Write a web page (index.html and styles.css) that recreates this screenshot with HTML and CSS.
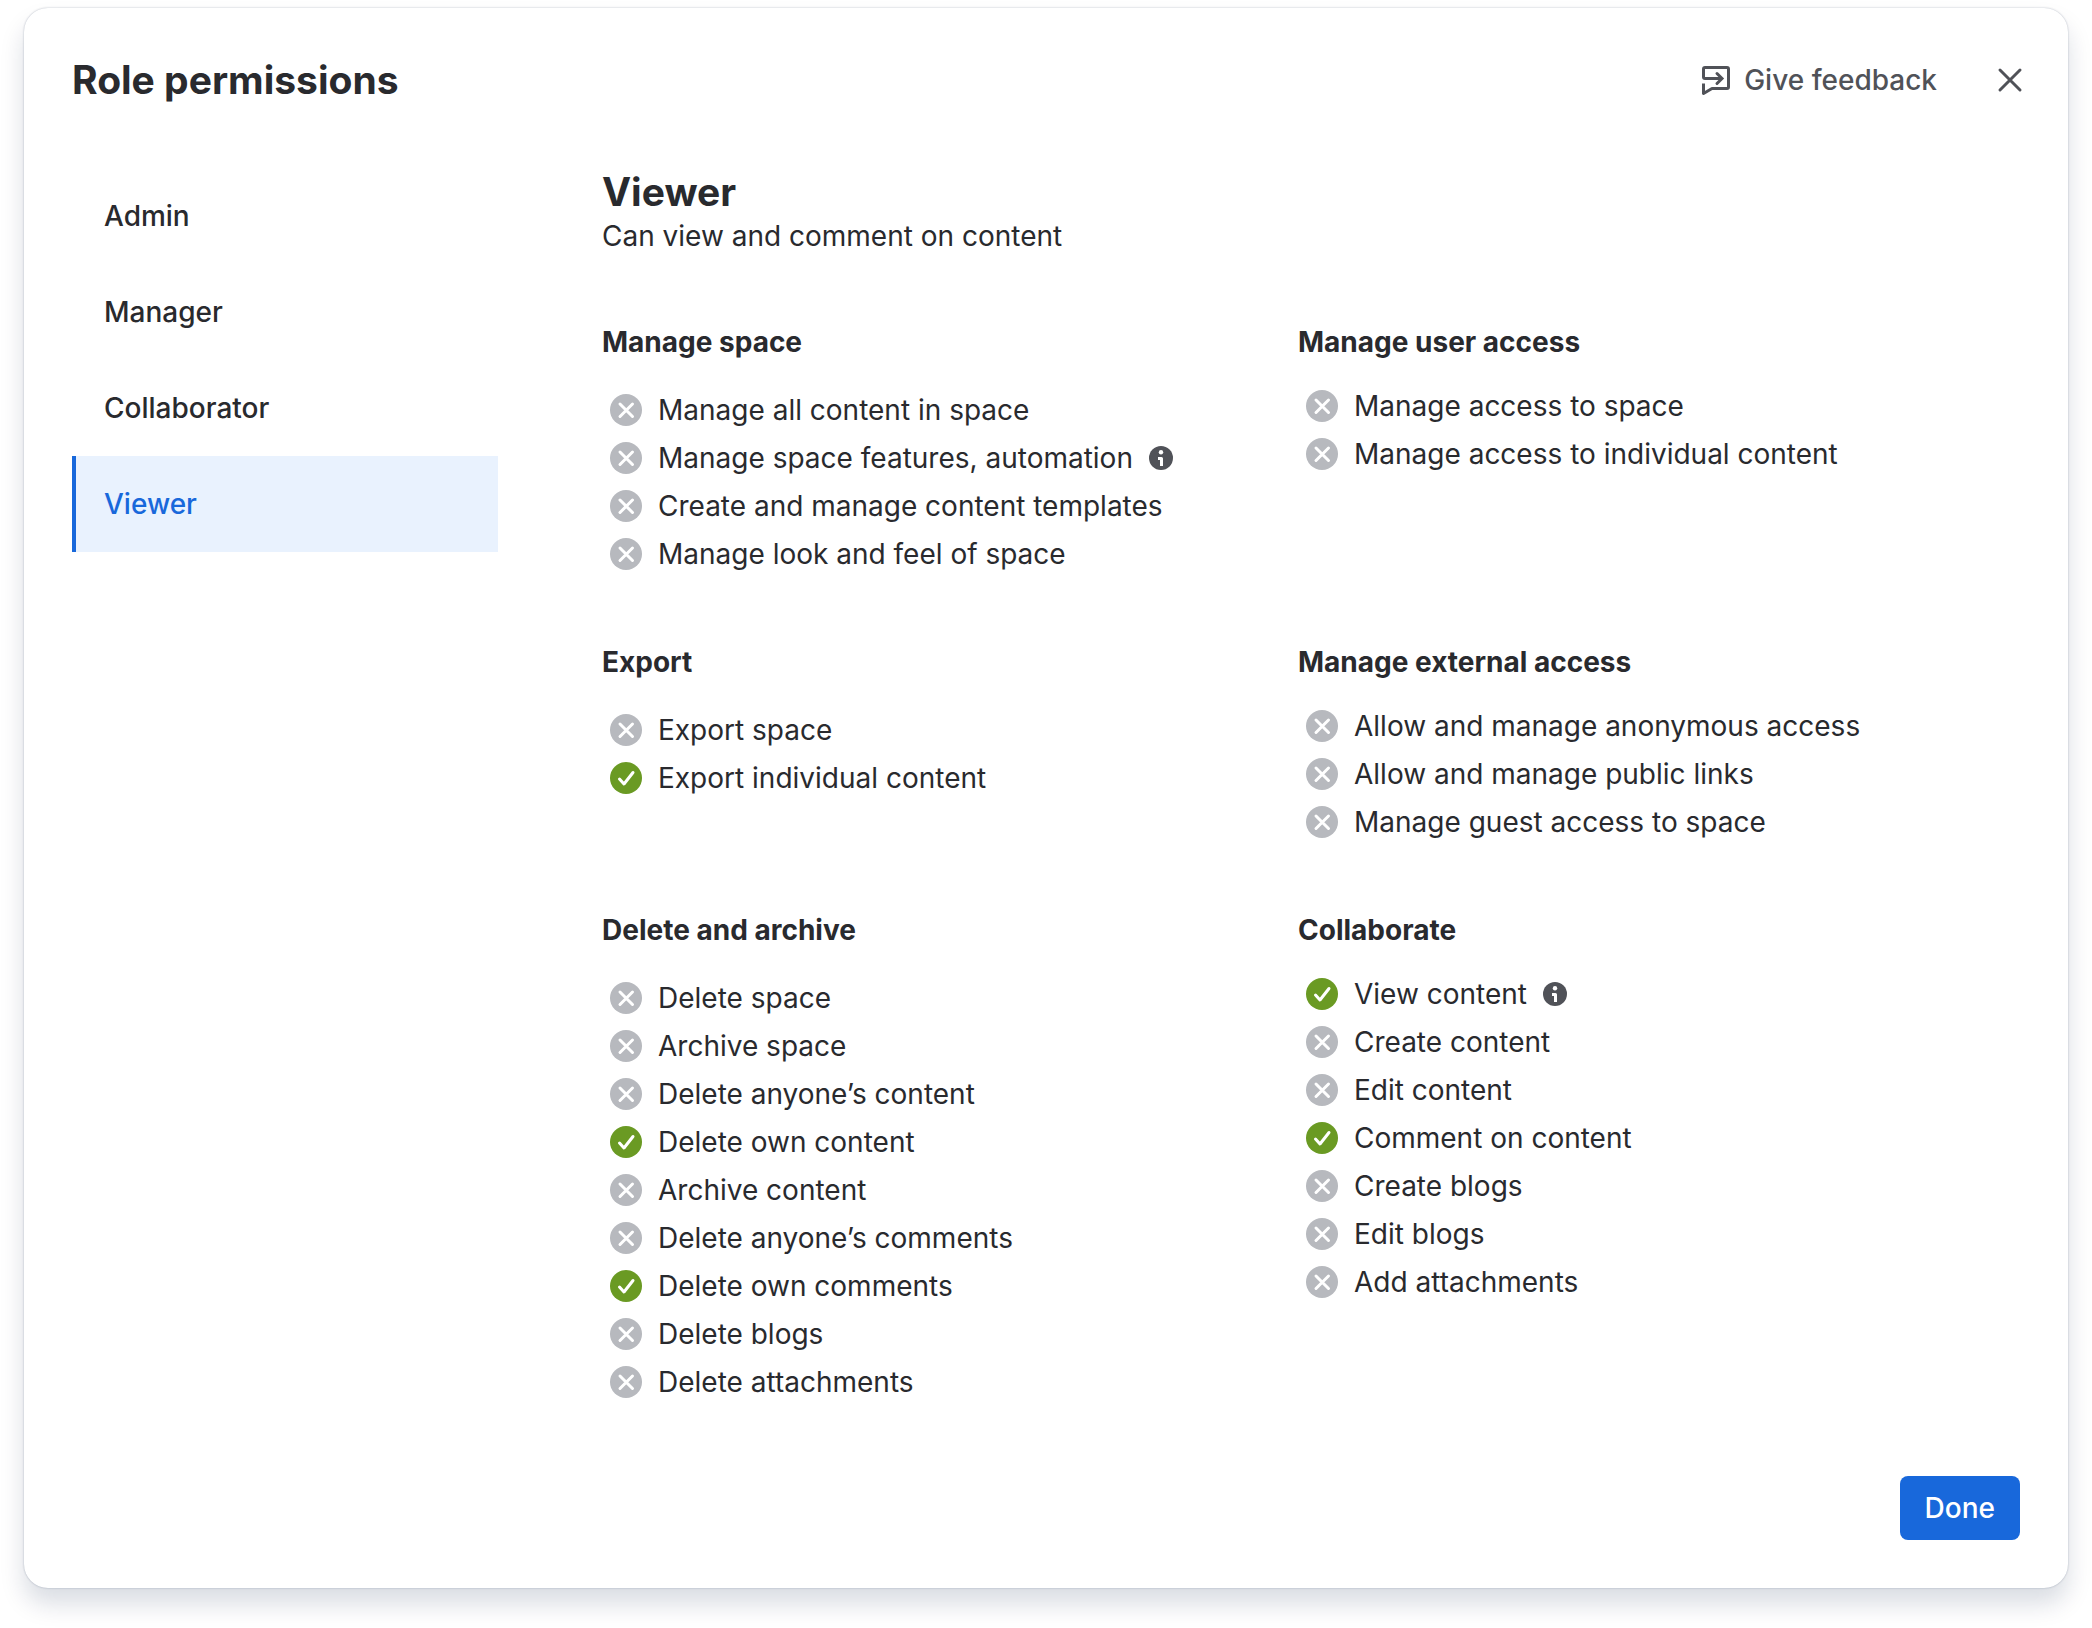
FILE: index.html
```html
<!DOCTYPE html>
<html lang="en">
<head>
  <meta charset="UTF-8">
  <meta name="viewport" content="width=device-width, initial-scale=1.0">
  <title>Role permissions</title>
  <link rel="stylesheet" href="styles.css">
</head>
<body>
  <!-- shared icons -->
  <svg class="sprite" aria-hidden="true">
    <symbol id="no" viewBox="0 0 32 32">
      <circle cx="16" cy="16" r="16" fill="#b7b9be"/>
      <path d="M10 10l12.500 12.500M22.500 10L10 22.500" fill="none" stroke="#fff" stroke-width="3" stroke-linecap="round"/>
    </symbol>
    <symbol id="yes" viewBox="0 0 32 32">
      <circle cx="16" cy="16" r="16" fill="#6a9a23"/>
      <path d="M9.500 17l4.500 5L23 10.500" fill="none" stroke="#fff" stroke-width="3" stroke-linecap="round" stroke-linejoin="round"/>
    </symbol>
    <symbol id="info" viewBox="0 0 24 24">
      <circle cx="12" cy="12" r="12" fill="#505258"/>
      <circle cx="12" cy="6.200" r="2.200" fill="#fff"/>
      <path d="M9 12.500h3.500V20" fill="none" stroke="#fff" stroke-width="3" stroke-linejoin="round"/>
    </symbol>
  </svg>

  <div class="modal" role="dialog" aria-labelledby="modalTitle">
    <header class="modal-header">
      <h1 id="modalTitle">Role permissions</h1>
      <button class="feedback-btn" type="button">
        <svg class="icon" viewBox="0 0 32 32" aria-hidden="true">
          <path d="M21 14.500H5A1.500 1.500 0 0 1 3.500 13V5A1.500 1.500 0 0 1 5 3.500H27A1.500 1.500 0 0 1 28.500 5V23A1.500 1.500 0 0 1 27 24.500H12L3.500 29.500V19.500" fill="none" stroke="currentColor" stroke-width="3" stroke-linejoin="round"/>
          <path d="M17 9.500l5 5-5 5" fill="none" stroke="currentColor" stroke-width="3" stroke-linecap="round"/>
        </svg>
        Give feedback
      </button>
      <button class="close-btn" type="button" aria-label="Close">
        <svg class="icon" viewBox="0 0 32 32" aria-hidden="true">
          <path d="M6 6l20 20M26 6L6 26" fill="none" stroke="currentColor" stroke-width="3" stroke-linecap="round"/>
        </svg>
      </button>
    </header>

    <div class="modal-body">
      <nav class="roles">
        <a href="#admin">Admin</a>
        <a href="#manager">Manager</a>
        <a href="#collaborator">Collaborator</a>
        <a href="#viewer" class="selected" aria-current="page">Viewer</a>
      </nav>

      <main class="role" id="viewer">
        <h2>Viewer</h2>
        <p class="role-desc">Can view and comment on content</p>

        <div class="groups">
          <section class="group">
            <h3>Manage space</h3>
            <ul>
              <li><svg class="icon"><use href="#no"/></svg>Manage all content in space</li>
              <li><svg class="icon"><use href="#no"/></svg>Manage space features, automation<svg class="info"><use href="#info"/></svg></li>
              <li><svg class="icon"><use href="#no"/></svg>Create and manage content templates</li>
              <li><svg class="icon"><use href="#no"/></svg>Manage look and feel of space</li>
            </ul>
          </section>

          <section class="group">
            <h3>Manage user access</h3>
            <ul>
              <li><svg class="icon"><use href="#no"/></svg>Manage access to space</li>
              <li><svg class="icon"><use href="#no"/></svg>Manage access to individual content</li>
            </ul>
          </section>

          <section class="group">
            <h3>Export</h3>
            <ul>
              <li><svg class="icon"><use href="#no"/></svg>Export space</li>
              <li><svg class="icon"><use href="#yes"/></svg>Export individual content</li>
            </ul>
          </section>

          <section class="group">
            <h3>Manage external access</h3>
            <ul>
              <li><svg class="icon"><use href="#no"/></svg>Allow and manage anonymous access</li>
              <li><svg class="icon"><use href="#no"/></svg>Allow and manage public links</li>
              <li><svg class="icon"><use href="#no"/></svg>Manage guest access to space</li>
            </ul>
          </section>

          <section class="group">
            <h3>Delete and archive</h3>
            <ul>
              <li><svg class="icon"><use href="#no"/></svg>Delete space</li>
              <li><svg class="icon"><use href="#no"/></svg>Archive space</li>
              <li><svg class="icon"><use href="#no"/></svg>Delete anyone’s content</li>
              <li><svg class="icon"><use href="#yes"/></svg>Delete own content</li>
              <li><svg class="icon"><use href="#no"/></svg>Archive content</li>
              <li><svg class="icon"><use href="#no"/></svg>Delete anyone’s comments</li>
              <li><svg class="icon"><use href="#yes"/></svg>Delete own comments</li>
              <li><svg class="icon"><use href="#no"/></svg>Delete blogs</li>
              <li><svg class="icon"><use href="#no"/></svg>Delete attachments</li>
            </ul>
          </section>

          <section class="group">
            <h3>Collaborate</h3>
            <ul>
              <li><svg class="icon"><use href="#yes"/></svg>View content<svg class="info"><use href="#info"/></svg></li>
              <li><svg class="icon"><use href="#no"/></svg>Create content</li>
              <li><svg class="icon"><use href="#no"/></svg>Edit content</li>
              <li><svg class="icon"><use href="#yes"/></svg>Comment on content</li>
              <li><svg class="icon"><use href="#no"/></svg>Create blogs</li>
              <li><svg class="icon"><use href="#no"/></svg>Edit blogs</li>
              <li><svg class="icon"><use href="#no"/></svg>Add attachments</li>
            </ul>
          </section>
        </div>
      </main>
    </div>

    <footer class="modal-footer">
      <button class="done-btn" type="button">Done</button>
    </footer>
  </div>
</body>
</html>
```
FILE: styles.css
```css
* {
  box-sizing: border-box;
}
body {
  margin: 0;
  padding: 8px 24px 40px;
  background: #fff;
  color: #292a2e;
  font-family: Inter, sans-serif;
  font-size: 28px;
  line-height: 40px;
}
h1, h2, h3, p, ul {
  margin: 0;
  padding: 0;
}
h1, h2 {
  font-size: 39px;
  line-height: 48px;
  font-weight: 653;
}
h3 {
  font-size: 28px;
  line-height: 40px;
  font-weight: 653;
}
button {
  height: 64px;
  border: none;
  border-radius: 8px;
  background: none;
  font: inherit;
  cursor: pointer;
}
.sprite {
  display: none;
}
.icon {
  width: 32px;
  height: 32px;
  flex: none;
}
.info {
  width: 24px;
  height: 24px;
  flex: none;
}
.modal {
  border-radius: 24px;
  background: #fff;
  box-shadow: 0 16px 24px rgba(9, 30, 66, 0.15), 0 0 2px rgba(9, 30, 66, 0.31);
}

/* header */
.modal-header {
  display: flex;
  align-items: center;
  gap: 16px;
  padding: 40px 26px 56px 48px;
}
.modal-header h1 {
  flex: 1;
}
.feedback-btn {
  display: flex;
  align-items: center;
  gap: 12px;
  padding: 0 25px;
  color: #505258;
  font-weight: 500;
}
.close-btn {
  display: flex;
  align-items: center;
  justify-content: center;
  width: 64px;
  padding: 0;
  color: #505258;
}

/* body */
.modal-body {
  display: grid;
  grid-template-columns: 426px 1fr;
  column-gap: 104px;
  padding: 0 74px 0 48px;
}
.roles a {
  display: flex;
  align-items: center;
  height: 96px;
  padding-left: 28px;
  border-left: 4px solid transparent;
  color: #292a2e;
  font-weight: 500;
  text-decoration: none;
}
.roles .selected {
  border-left-color: #1868db;
  background: #e9f2fe;
  color: #1868db;
}
.role-desc {
  margin-bottom: 66px;
}
.groups {
  display: grid;
  grid-template-columns: 1fr 1fr;
  row-gap: 64px;
}
.group ul {
  margin-top: 20px;
  list-style: none;
}
.group:nth-child(odd) ul {
  margin-top: 24px;
}
.group li {
  display: flex;
  align-items: center;
  gap: 16px;
  height: 48px;
  padding-left: 8px;
}

/* footer */
.modal-footer {
  display: flex;
  justify-content: flex-end;
  padding: 70px 48px 48px;
}
.done-btn {
  padding: 0 25px;
  background: #1868db;
  color: #fff;
  font-weight: 500;
}
```
